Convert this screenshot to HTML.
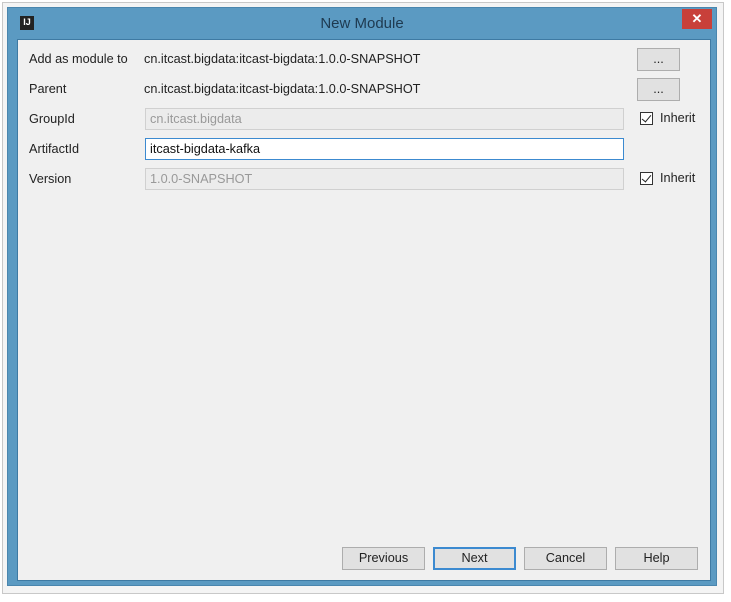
<!DOCTYPE html>
<html><head><style>
body{margin:0;width:731px;height:602px;background:#fff;position:relative;overflow:hidden;font-family:"Liberation Sans",sans-serif;font-size:12.7px;color:#222}
.shadow{position:absolute;left:2px;top:2px;width:720px;height:590px;border:1px solid #c8c8c8;background:#f4f4f4}
.frame{position:absolute;left:7px;top:7px;width:710px;height:579px;background:#5b9ac2;border:1px solid #4a86ae;box-sizing:border-box}
.title{position:absolute;left:0;top:0;width:100%;height:31px;text-align:center;line-height:31px;font-size:15px;color:#1e3a50}
.close{position:absolute;left:674px;top:1px;width:30px;height:20px;background:#c8403a;color:#fff;text-align:center;line-height:20px;font-size:13px;font-weight:bold}
.logo{position:absolute;left:12px;top:8px;width:14px;height:14px;background:#222;color:#fff;font-size:9px;font-weight:bold;line-height:12px;text-align:center}
.content{position:absolute;left:9px;top:31px;width:694px;height:542px;background:#f0f0f0;border:1px solid #3e7aa3;box-sizing:border-box}
.lbl{position:absolute;left:21px}
.val{position:absolute;left:144px}
.inp{position:absolute;left:145px;width:479px;height:22px;box-sizing:border-box;border:1px solid #d0d0d0;background:#ececec;color:#999;padding-left:4px;line-height:20px}
.btn{position:absolute;height:23px;box-sizing:border-box;border:1px solid #adadad;background:#e1e1e1;text-align:center;line-height:21px}
.cb{position:absolute;left:640px;width:13px;height:13px;border:1px solid #333;box-sizing:border-box;background:#fff}
.cb:after{content:"";position:absolute;left:3px;top:0px;width:4px;height:8px;border:solid #222;border-width:0 1.5px 1.5px 0;transform:rotate(40deg)}
.inh{position:absolute;left:660px}
</style></head><body>
<div class="shadow"></div>
<div class="frame">
<div class="logo">IJ</div>
<div class="title">New Module</div>
<div class="close">✕</div>
<div class="content"></div>
</div>
<div class="lbl" style="top:52px;left:29px">Add as module to</div>
<div class="val" style="top:52px">cn.itcast.bigdata:itcast-bigdata:1.0.0-SNAPSHOT</div>
<div class="btn" style="left:637px;top:48px;width:43px">...</div>
<div class="lbl" style="top:82px;left:29px">Parent</div>
<div class="val" style="top:82px">cn.itcast.bigdata:itcast-bigdata:1.0.0-SNAPSHOT</div>
<div class="btn" style="left:637px;top:78px;width:43px">...</div>
<div class="lbl" style="top:112px;left:29px">GroupId</div>
<div class="inp" style="top:108px">cn.itcast.bigdata</div>
<div class="cb" style="top:112px"></div><div class="inh" style="top:111px">Inherit</div>
<div class="lbl" style="top:142px;left:29px">ArtifactId</div>
<div class="inp" style="top:138px;background:#fff;border-color:#3c8ad0;color:#111">itcast-bigdata-kafka</div>
<div class="lbl" style="top:172px;left:29px">Version</div>
<div class="inp" style="top:168px">1.0.0-SNAPSHOT</div>
<div class="cb" style="top:172px"></div><div class="inh" style="top:171px">Inherit</div>
<div class="btn" style="left:342px;top:547px;width:83px">Previous</div>
<div class="btn" style="left:433px;top:547px;width:83px;border:2px solid #3c8ad0;line-height:19px">Next</div>
<div class="btn" style="left:524px;top:547px;width:83px">Cancel</div>
<div class="btn" style="left:615px;top:547px;width:83px">Help</div>
</body></html>
